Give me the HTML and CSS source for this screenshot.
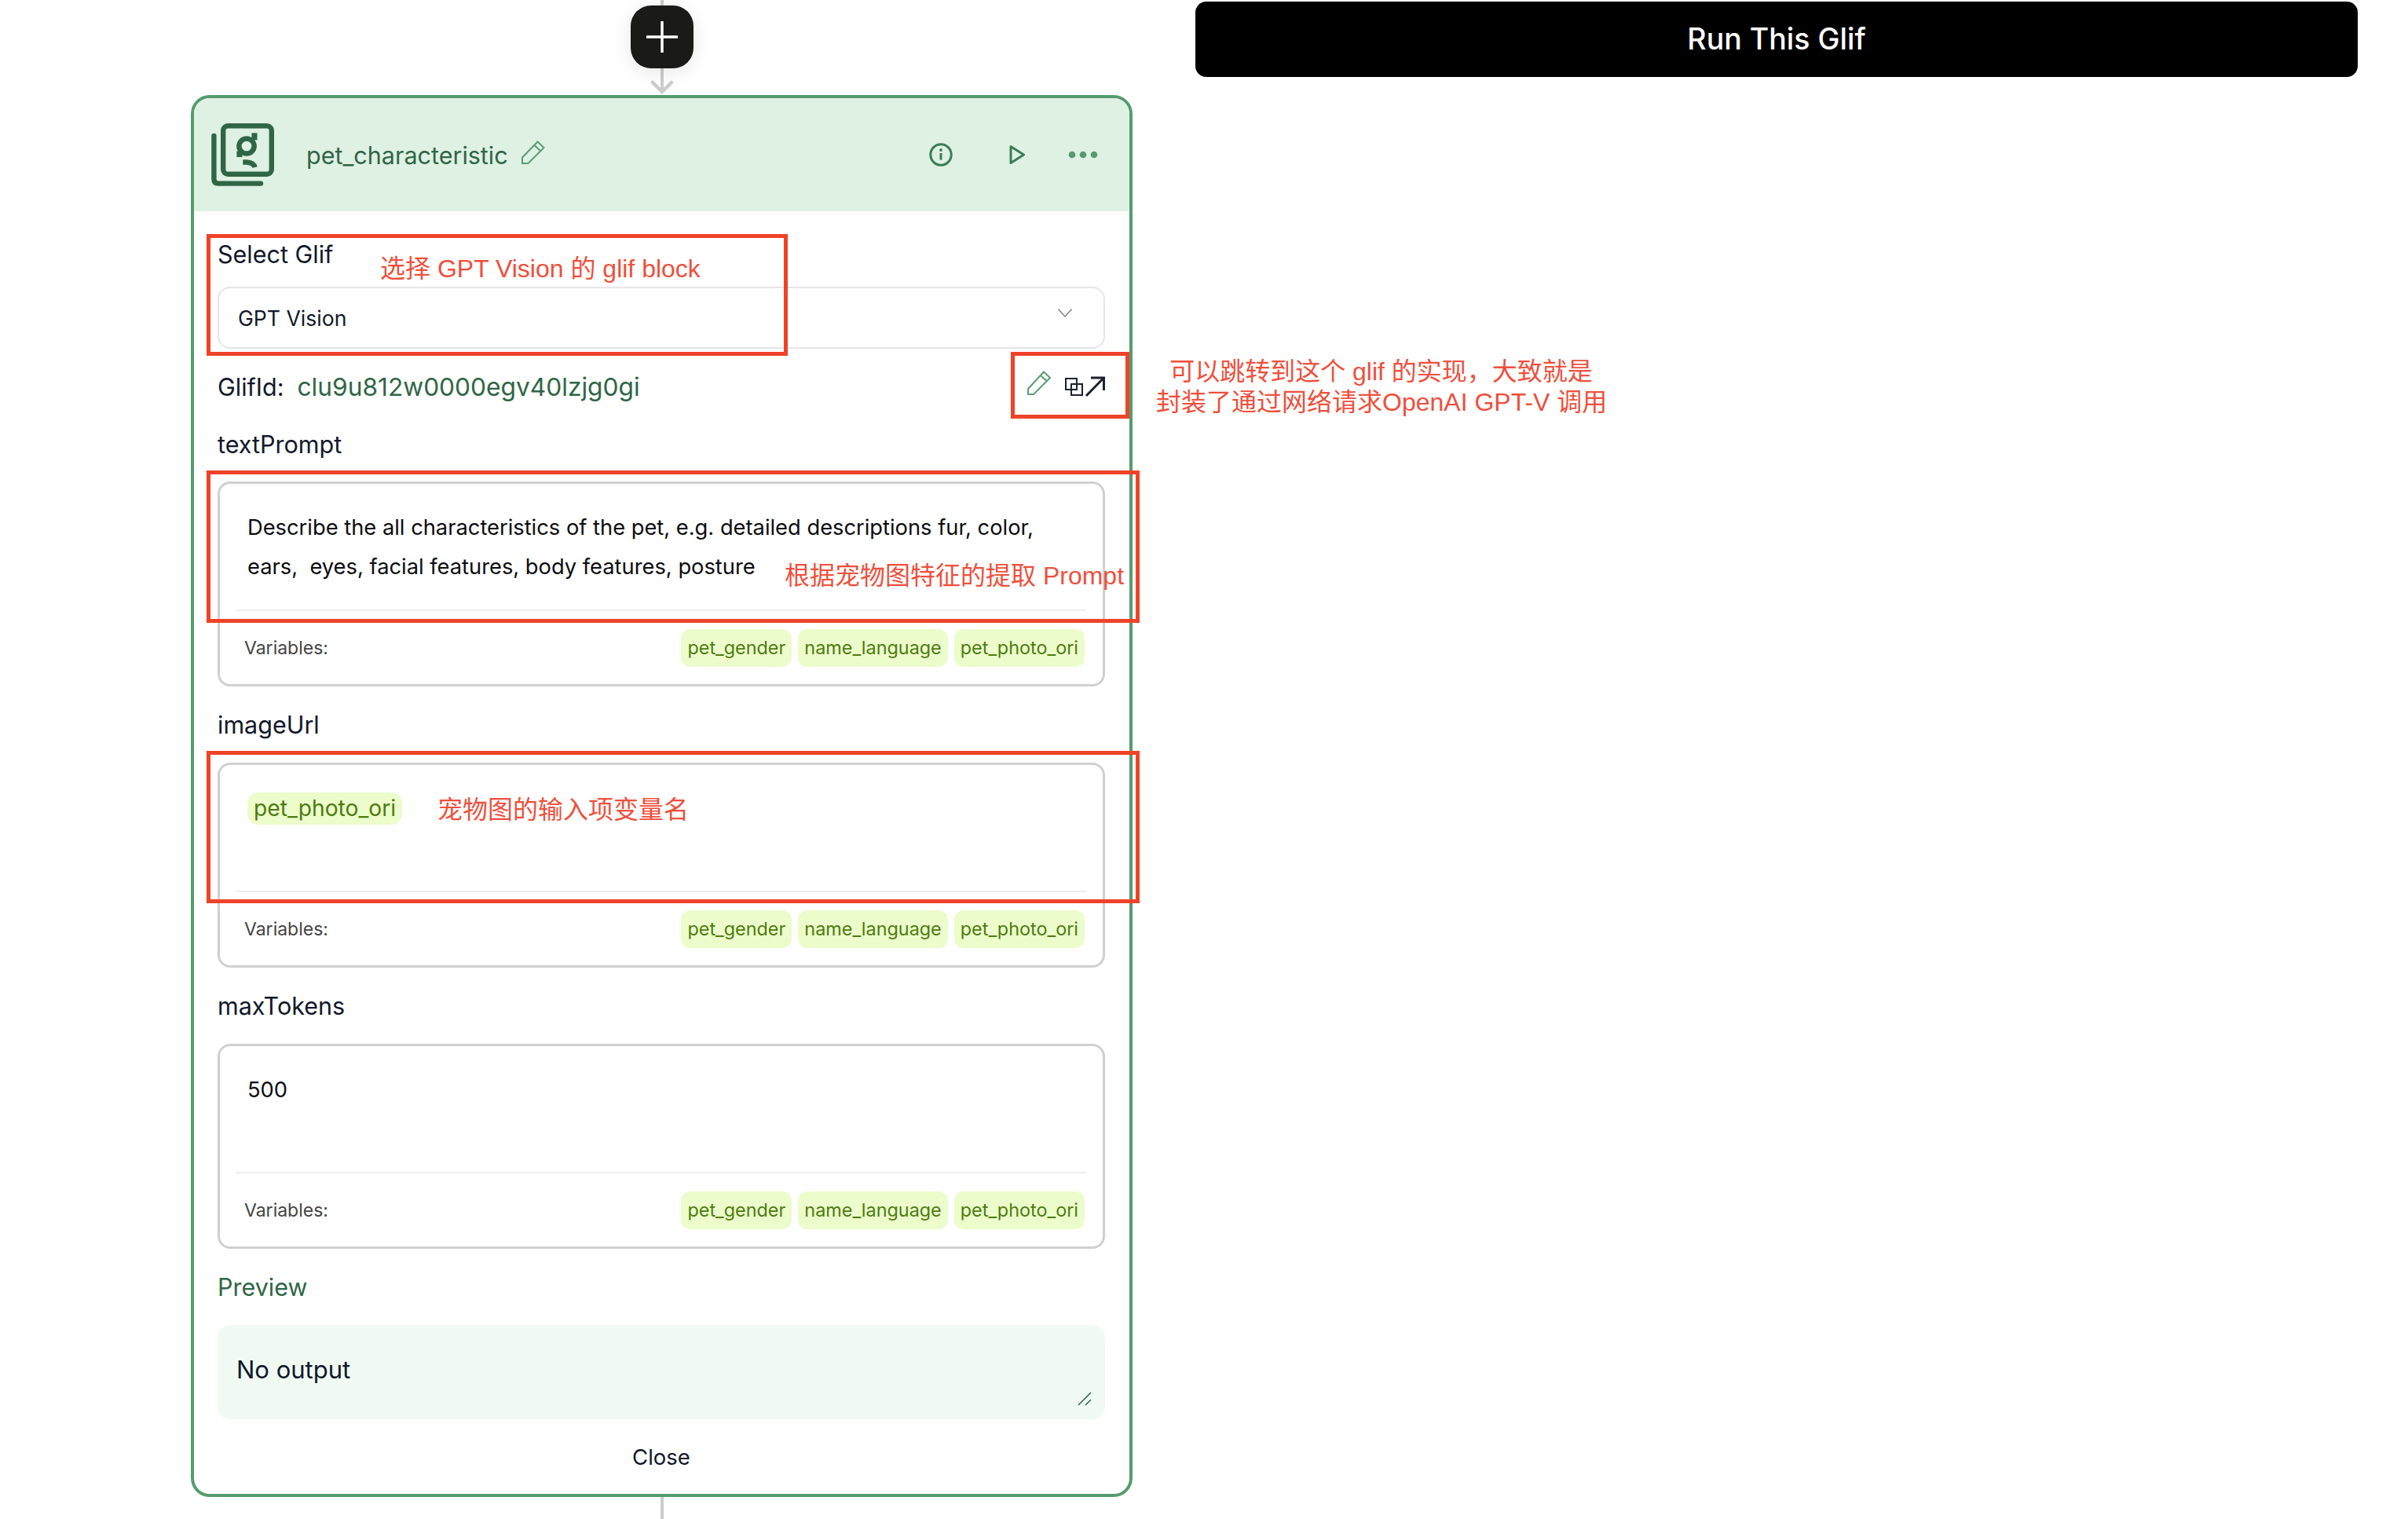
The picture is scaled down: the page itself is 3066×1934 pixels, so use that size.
FILE: index.html
```html
<!DOCTYPE html>
<html lang="zh-CN">
<head>
<meta charset="utf-8">
<title>pet_characteristic</title>
<link rel="stylesheet" href="styles.css">
</head>
<body>
<div class="canvas">
  <div class="flow">
    <div class="stem stem-top"></div>
    <button class="add-btn" type="button">
      <svg class="add-icon" width="40" height="40" viewBox="0 0 40 40"><path d="M20 0V40M0 20H40" fill="none" stroke="#fff" stroke-width="3.5"/></svg>
    </button>
    <svg class="connector" width="32" height="34" viewBox="0 0 32 34"><path d="M16 0V31" fill="none" stroke="#ccc" stroke-width="4"/><path d="M4 18L16 30L28 18" fill="none" stroke="#ccc" stroke-width="4.5" stroke-linecap="round" stroke-linejoin="round"/></svg>
    <section class="card">
      <header class="card-head">
        <svg class="logo" width="80" height="80" viewBox="0 0 80 80">
          <rect x="15.2" y="3.2" width="61.6" height="61.6" rx="6" fill="none" stroke="#2f6646" stroke-width="6.4"/>
          <path d="M3.4 16V71Q3.4 76.6 9 76.6H63" fill="none" stroke="#2f6646" stroke-width="6.4" stroke-linecap="round"/>
          <circle cx="45" cy="29" r="9.6" fill="none" stroke="#2f6646" stroke-width="6.5"/>
          <rect x="51.5" y="12.3" width="7" height="9" fill="#2f6646"/>
          <rect x="32.4" y="35.5" width="7" height="7.5" fill="#2f6646"/>
          <path d="M40.3 49.5H45Q54 50 55.5 56" fill="none" stroke="#2f6646" stroke-width="6.5"/>
        </svg>
        <span class="card-title">pet_characteristic</span>
        <svg class="title-pencil" width="30" height="30" viewBox="0 0 30 30"><path d="M1 29V21.5L20.5 1.5L28.5 9L8.5 29ZM16.5 6L24.5 13.5" fill="none" stroke="#5a9e74" stroke-width="2"/></svg>
        <div class="head-actions">
          <svg width="30" height="30" viewBox="0 0 30 30"><circle cx="15" cy="15" r="13.2" fill="none" stroke="#3a7d55" stroke-width="3"/><circle cx="15" cy="9" r="1.9" fill="#3a7d55"/><path d="M15 13V21.5" fill="none" stroke="#3a7d55" stroke-width="3"/></svg>
          <svg class="play" width="20" height="26" viewBox="0 0 20 26"><path d="M2 2.5V23.5L18.5 13Z" fill="none" stroke="#3a7d55" stroke-width="3" stroke-linejoin="round"/></svg>
          <svg class="dots" width="38" height="10" viewBox="0 0 38 10"><circle cx="5" cy="5" r="4.3" fill="#559b70"/><circle cx="19" cy="5" r="4.3" fill="#559b70"/><circle cx="33" cy="5" r="4.3" fill="#559b70"/></svg>
        </div>
      </header>
      <div class="card-body">
        <div class="label label-select">Select Glif</div>
        <div class="select">
          <span class="select-value">GPT Vision</span>
          <svg class="chevron" width="18" height="11" viewBox="0 0 18 11"><path d="M0.5 0.5L9 10L17.5 0.5" fill="none" stroke="#77777f" stroke-width="1.2"/></svg>
        </div>
        <div class="glif-row">
          <div class="label">GlifId:</div>
          <div class="glif-id">clu9u812w0000egv40lzjg0gi</div>
          <svg class="glif-icons" width="100" height="40" viewBox="0 0 100 40">
            <path d="M2 30V23L22 1.5L30 9L9 30ZM18 6L26 13.5" fill="none" stroke="#5a9e74" stroke-width="2"/>
            <path d="M50 10H64V24H50ZM57 17H71V31H57Z" fill="none" stroke="#1c2230" stroke-width="2"/>
            <path d="M76 32L98 9.500M82 9H98.500V25" fill="none" stroke="#1c2230" stroke-width="3"/>
          </svg>
        </div>

        <div class="field">
          <div class="label">textPrompt</div>
          <div class="box">
            <div class="box-main">Describe the all characteristics of the pet, e.g. detailed descriptions fur, color,<br>ears,&nbsp; eyes, facial features, body features, posture</div>
            <div class="box-foot">
              <span class="vars">Variables:</span>
              <div class="chips"><span class="chip">pet_gender</span><span class="chip">name_language</span><span class="chip">pet_photo_ori</span></div>
            </div>
          </div>
        </div>

        <div class="field">
          <div class="label">imageUrl</div>
          <div class="box">
            <div class="box-main box-main-chip"><span class="chip chip-large">pet_photo_ori</span></div>
            <div class="box-foot">
              <span class="vars">Variables:</span>
              <div class="chips"><span class="chip">pet_gender</span><span class="chip">name_language</span><span class="chip">pet_photo_ori</span></div>
            </div>
          </div>
        </div>

        <div class="field">
          <div class="label">maxTokens</div>
          <div class="box">
            <div class="box-main">500</div>
            <div class="box-foot">
              <span class="vars">Variables:</span>
              <div class="chips"><span class="chip">pet_gender</span><span class="chip">name_language</span><span class="chip">pet_photo_ori</span></div>
            </div>
          </div>
        </div>

        <div class="label preview-label">Preview</div>
        <div class="preview">
          No output
          <svg class="resize" width="18" height="18" viewBox="0 0 18 18"><path d="M1 17L17 1M10 17L17 10" fill="none" stroke="#2f6646" stroke-width="1.500"/></svg>
        </div>
        <div class="close">Close</div>
      </div>
    </section>
    <div class="stem stem-bottom"></div>
  </div>

  <div class="side">
    <button class="run-btn" type="button">Run This Glif</button>
  </div>

  <div class="mark mark-select"></div>
  <div class="mark mark-icons"></div>
  <div class="mark mark-prompt"></div>
  <div class="mark mark-image"></div>
  <div class="note note-select">选择 GPT Vision 的 glif block</div>
  <div class="note note-prompt">根据宠物图特征的提取 Prompt</div>
  <div class="note note-image">宠物图的输入项变量名</div>
  <div class="note note-side">可以跳转到这个 glif 的实现，大致就是<br>封装了通过网络请求OpenAI GPT-V 调用</div>
</div>
</body>
</html>
```

FILE: styles.css
```css
* { box-sizing: border-box; }
html, body { margin: 0; padding: 0; background: #fff; }
body { font-family: Inter, "Noto Sans CJK SC", sans-serif; color: #11182a; }
.canvas { position: relative; width: 3066px; height: 1934px; overflow: hidden; display: flex; align-items: flex-start; }
.flow { margin-left: 243px; width: 1199px; display: flex; flex-direction: column; align-items: center; }
.stem { width: 4px; background: #ccc; }
.stem-top { height: 7px; }
.stem-bottom { height: 29px; }
.add-btn { width: 80px; height: 80px; border: 0; padding: 0; border-radius: 26px; background: #1a1a18; box-shadow: 0 4px 24px rgba(0,0,0,.1); display: flex; align-items: center; justify-content: center; position: relative; z-index: 1; }
.add-icon { display: block; }
.connector { display: block; height: 34px; }
.card { width: 1199px; height: 1785px; margin-top: 0; border: 4px solid #559b6f; border-radius: 24px; overflow: hidden; background: #fff; }
.card-head { height: 144px; background: #dff1e3; display: flex; align-items: center; padding: 0 0 8px 22px; }
.logo { display: block; margin-top: 8px; }
.card-title { margin-left: 41px; font-size: 30.5px; line-height: 40px; color: #2f6646; margin-top: 10px; }
.title-pencil { margin-left: 17px; margin-top: 2px; }
.head-actions { margin-left: auto; display: flex; align-items: center; padding-right: 40px; margin-top: 8px; }
.play { margin-left: 72px; }
.dots { margin-left: 55px; }
.card-body { padding: 35px 31px 0 30px; }
.label { font-size: 30.5px; line-height: 40px; color: #11182a; }
.select { margin-top: 21px; height: 79px; border: 2.5px solid #e5e5ea; border-radius: 16px; padding: 0 40px 0 24px; display: flex; align-items: center; justify-content: space-between; }
.select-value { font-size: 26.6px; line-height: 40px; }
.chevron { margin-bottom: 12px; }
.glif-row { margin-top: 29px; display: flex; align-items: center; height: 40px; }
.glif-id { margin-left: 17px; font-size: 31.7px; line-height: 40px; color: #2f6646; }
.glif-icons { margin-left: auto; margin-top: -2px; }
.field { margin-top: 33px; }
.field + .field { margin-top: 29px; }
.box { margin-top: 27px; height: 261px; border: 3px solid #d0d0d0; border-radius: 16px; display: flex; flex-direction: column; }
.field + .field .box { margin-top: 28px; }
.box-main { height: 160px; padding: 31px 35px 0; font-size: 27.3px; line-height: 50px; color: #0c0c10; }
.box-main-chip { padding-top: 35px; }
.box-foot { height: 95px; margin: 0 21px 0 21px; padding: 23px 2px 0 10px; border-top: 2px solid #eeeef0; display: flex; justify-content: space-between; align-items: flex-start; }
.vars { font-size: 23px; line-height: 48px; color: #444; }
.chips { display: flex; gap: 8px; }
.chip { display: block; height: 48px; padding: 0 8px; border-radius: 12px; background: #ecfccb; color: #4d7c0f; font-size: 23.4px; line-height: 48px; }
.chip-large { width: fit-content; height: 41px; line-height: 41px; font-size: 28.2px; padding: 0 8px; border-radius: 14px; }
.preview-label { margin-top: 29px; color: #2f6646; }
.preview { position: relative; margin-top: 28px; height: 120px; border-radius: 16px; background: #f0faf3; padding: 37px 24px 0; font-size: 31px; line-height: 40px; color: #11182a; }
.resize { position: absolute; right: 17px; bottom: 17px; }
.close { margin-top: 28px; text-align: center; font-size: 27.5px; line-height: 40px; }
.side { margin-left: 80px; margin-top: 2px; width: 1480px; }
.run-btn { display: block; width: 100%; height: 96px; border: 0; border-radius: 14px; background: #000; color: #fff; font-family: inherit; font-size: 37.5px; font-weight: 500; line-height: 96px; padding: 0; }
.mark { position: absolute; border: 5px solid #ee4328; }
.mark-select { left: 263px; top: 298px; width: 740px; height: 155px; }
.mark-icons { left: 1287px; top: 448px; width: 151px; height: 85px; }
.mark-prompt { left: 263px; top: 599px; width: 1188px; height: 194px; }
.mark-image { left: 263px; top: 956px; width: 1188px; height: 194px; }
.note { position: absolute; font-family: "Liberation Sans", "Noto Sans CJK SC", sans-serif; font-size: 32px; line-height: 39px; color: #ef4f3c; white-space: nowrap; }
.note-select { left: 484px; top: 323px; }
.note-prompt { left: 999px; top: 714px; }
.note-image { left: 557px; top: 1012px; }
.note-side { left: 1472px; top: 454px; width: 573px; text-align: center; }
```
